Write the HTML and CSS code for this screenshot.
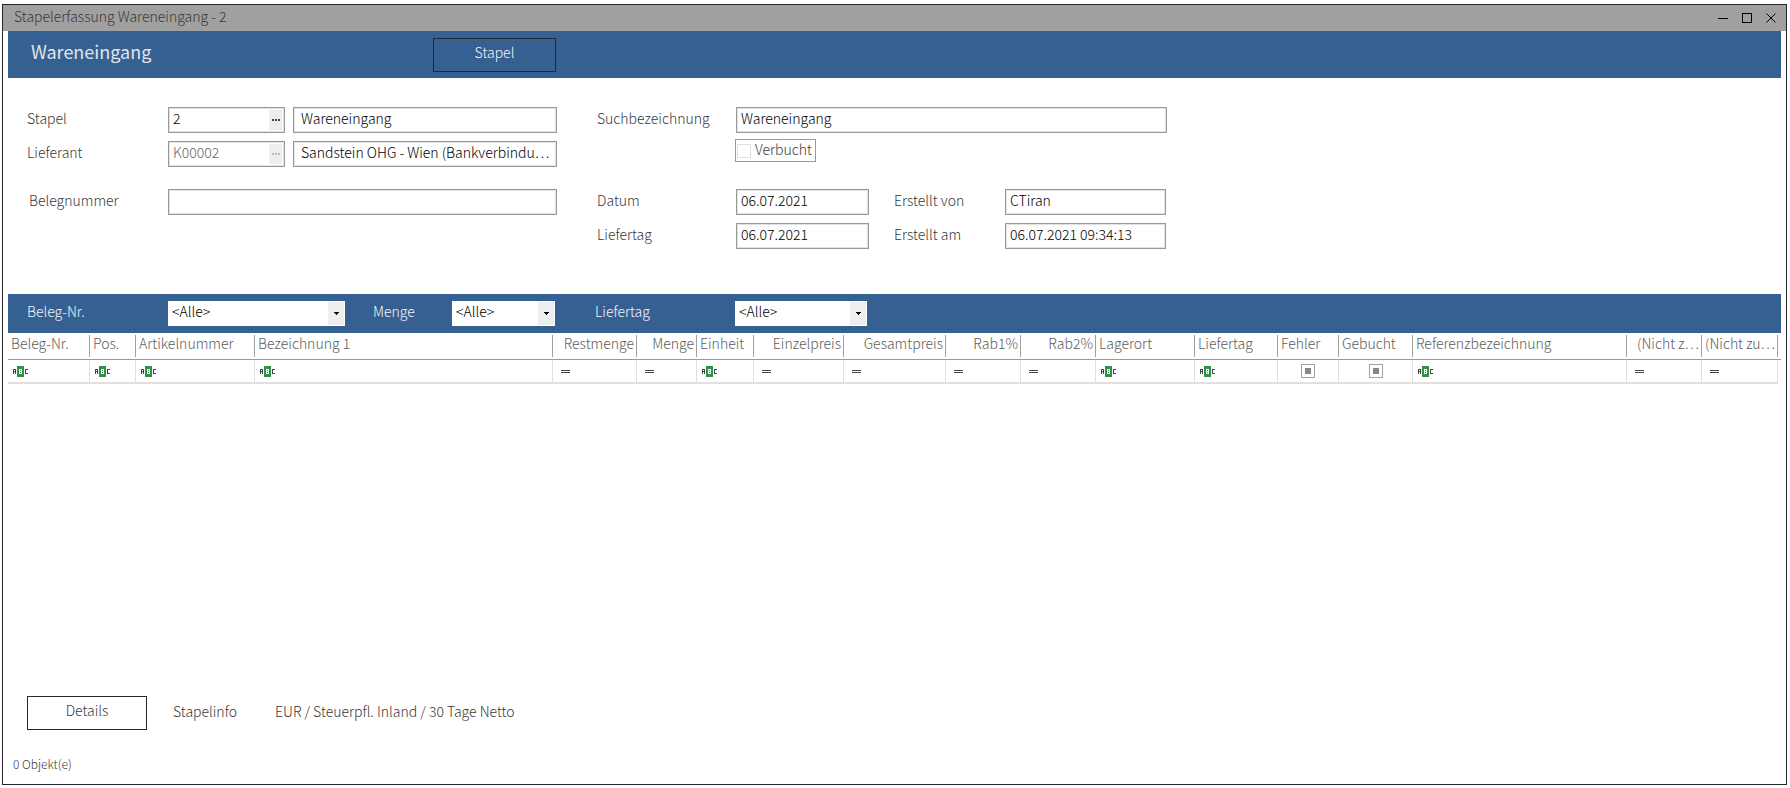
FILE: index.html
```html
<!DOCTYPE html>
<html lang="de">
<head>
<meta charset="utf-8">
<title>Stapelerfassung Wareneingang - 2</title>
<link rel="stylesheet" href="styles.css">
</head>
<body>
<svg class="defs" aria-hidden="true">
  <symbol id="abc" viewBox="0 0 16 12">
    <path fill="#444" d="M0 4h3v1H0zM0 5h1v4H0zM2 5h1v4H2zM1 6h1v1H1zM12 4h3v1h-3zM12 5h1v3h-1zM12 8h3v1h-3z"/>
    <path fill="#2f9247" d="M4 1h7v11H4z"/>
    <path fill="#fff" d="M6 4h3v1H6zM6 6h3v1H6zM6 8h3v1H6zM6 4h1v5H6zM8 4h1v5H8z"/>
  </symbol>
  <symbol id="arrow" viewBox="0 0 5 3">
    <path fill="#000" d="M0 0h5v1H0zM1 1h3v1H1zM2 2h1v1H2z"/>
  </symbol>
  <symbol id="dots" viewBox="0 0 8 2">
    <path fill="currentColor" d="M0 0h2v2H0zM3 0h2v2H3zM6 0h2v2H6z"/>
  </symbol>
</svg>
<main class="window">
  <header class="titlebar">
    <span class="titlebar-text">Stapelerfassung Wareneingang - 2</span>
    <button class="win-btn" type="button" aria-label="Minimieren"><svg viewBox="0 0 10 10"><path d="M0 5h10v1H0z"/></svg></button>
    <button class="win-btn" type="button" aria-label="Maximieren"><svg viewBox="0 0 10 10"><path d="M0 0h10v10H0zM1 1v8h8V1z" fill-rule="evenodd"/></svg></button>
    <button class="win-btn" type="button" aria-label="Schließen"><svg class="smooth" viewBox="0 0 10 10"><path d="M0.5 0.5l9 9M9.5 0.5l-9 9" stroke="#000" fill="none"/></svg></button>
  </header>
  <div class="content">
    <div class="banner">
      <h1 class="banner-title">Wareneingang</h1>
      <button class="box-btn banner-btn" type="button">Stapel</button>
    </div>

    <form class="form">
      <div class="form-left">
        <div class="row">
          <label class="label" for="stapel">Stapel</label>
          <div class="field lookup"><input id="stapel" value="2"><button type="button" aria-label="Stapel suchen"><svg><use href="#dots"/></svg></button></div>
          <div class="field wide"><input aria-label="Stapelbezeichnung" value="Wareneingang"></div>
        </div>
        <div class="row">
          <label class="label" for="lieferant">Lieferant</label>
          <div class="field lookup disabled"><input id="lieferant" value="K00002" disabled><button type="button" disabled aria-label="Lieferant suchen"><svg><use href="#dots"/></svg></button></div>
          <div class="field wide"><input aria-label="Lieferantenname" value="Sandstein OHG - Wien (Bankverbindu…"></div>
        </div>
        <div class="row row-gap">
          <label class="label indent" for="beleg">Belegnummer</label>
          <div class="field full"><input id="beleg"></div>
        </div>
      </div>
      <div class="form-right">
        <div class="row">
          <label class="label" for="such">Suchbezeichnung</label>
          <div class="field search"><input id="such" value="Wareneingang"></div>
        </div>
        <label class="check"><input type="checkbox"><span>Verbucht</span></label>
        <div class="row">
          <label class="label" for="datum">Datum</label>
          <div class="field date"><input id="datum" value="06.07.2021"></div>
          <label class="label label-2" for="von">Erstellt von</label>
          <div class="field created"><input id="von" value="CTiran"></div>
        </div>
        <div class="row">
          <label class="label" for="liefertag">Liefertag</label>
          <div class="field date"><input id="liefertag" value="06.07.2021"></div>
          <label class="label label-2" for="am">Erstellt am</label>
          <div class="field created"><input id="am" value="06.07.2021 09:34:13"></div>
        </div>
      </div>
    </form>

    <div class="filterbar">
      <label class="f-label f1" for="f-beleg">Beleg-Nr.</label>
      <div class="select s1"><select id="f-beleg"><option>&lt;Alle&gt;</option></select><span class="drop"><svg><use href="#arrow"/></svg></span></div>
      <label class="f-label f2" for="f-menge">Menge</label>
      <div class="select s2"><select id="f-menge"><option>&lt;Alle&gt;</option></select><span class="drop"><svg><use href="#arrow"/></svg></span></div>
      <label class="f-label f3" for="f-tag">Liefertag</label>
      <div class="select s3"><select id="f-tag"><option>&lt;Alle&gt;</option></select><span class="drop"><svg><use href="#arrow"/></svg></span></div>
    </div>

    <div class="grid-area">
      <table class="grid">
        <colgroup>
          <col class="w82"><col class="w46"><col class="w119"><col class="w298"><col class="w84"><col class="w60"><col class="w57"><col class="w90"><col class="w102"><col class="w75"><col class="w75"><col class="w99"><col class="w83"><col class="w61"><col class="w74"><col class="w214"><col class="w75"><col class="w76"><col class="w3">
        </colgroup>
        <thead>
          <tr>
            <th><span>Beleg-Nr.</span></th><th><span>Pos.</span></th><th><span>Artikelnummer</span></th><th><span>Bezeichnung 1</span></th>
            <th class="num"><span>Restmenge</span></th><th class="num"><span>Menge</span></th><th><span>Einheit</span></th><th class="num"><span>Einzelpreis</span></th>
            <th class="num"><span>Gesamtpreis</span></th><th class="num"><span>Rab1%</span></th><th class="num"><span>Rab2%</span></th><th><span>Lagerort</span></th>
            <th><span>Liefertag</span></th><th><span>Fehler</span></th><th><span>Gebucht</span></th><th><span>Referenzbezeichnung</span></th>
            <th class="num"><span>(Nicht z…</span></th><th class="num"><span>(Nicht zu…</span></th><th class="end"></th>
          </tr>
        </thead>
        <tbody>
          <tr>
            <td><svg class="abc"><use href="#abc"/></svg></td>
            <td><svg class="abc"><use href="#abc"/></svg></td>
            <td><svg class="abc"><use href="#abc"/></svg></td>
            <td><svg class="abc"><use href="#abc"/></svg></td>
            <td><i class="eq"></i></td>
            <td><i class="eq"></i></td>
            <td><svg class="abc"><use href="#abc"/></svg></td>
            <td><i class="eq"></i></td>
            <td><i class="eq"></i></td>
            <td><i class="eq"></i></td>
            <td><i class="eq"></i></td>
            <td><svg class="abc"><use href="#abc"/></svg></td>
            <td><svg class="abc"><use href="#abc"/></svg></td>
            <td class="mid"><input class="tri" type="checkbox" aria-label="Fehler"></td>
            <td class="mid"><input class="tri" type="checkbox" aria-label="Gebucht"></td>
            <td><svg class="abc"><use href="#abc"/></svg></td>
            <td><i class="eq"></i></td>
            <td><i class="eq"></i></td>
            <td class="end"></td>
          </tr>
        </tbody>
      </table>
    </div>

    <div class="details">
      <button class="box-btn details-btn" type="button">Details</button>
      <span class="info-label">Stapelinfo</span>
      <span class="info">EUR / Steuerpfl. Inland / 30 Tage Netto</span>
    </div>
    <footer class="status">0 Objekt(e)</footer>
  </div>
</main>
</body>
</html>
```
FILE: styles.css
```css
* { box-sizing: border-box; }
body {
  margin: 0;
  padding: 4px 3px 3px 2px;
  height: 100vh;
  display: flex;
  background: #fff;
  color: #383838;
  font: 300 14px/20px "Noto Sans CJK KR", "Noto Sans", sans-serif;
}
button, input, select { font: inherit; color: inherit; margin: 0; }
svg { display: block; shape-rendering: crispEdges; }
.defs { position: absolute; width: 0; height: 0; }

.window {
  flex: 1;
  min-width: 0;
  display: flex;
  flex-direction: column;
  border: 1px solid #26262c;
  background: #fff;
}
.titlebar {
  display: flex;
  align-items: center;
  height: 26px;
  padding: 0 10px 0 11px;
  gap: 14px;
  background: #a0a0a0;
}
.titlebar-text { flex: 1; padding-bottom: 4px; }
.win-btn { width: 10px; height: 10px; padding: 0; border: 0; background: none; }
.win-btn svg { width: 10px; height: 10px; }
.smooth { shape-rendering: auto; }

.content { flex: 1; display: flex; flex-direction: column; padding: 0 5px; }
.banner {
  display: flex;
  align-items: center;
  height: 47px;
  padding-left: 23px;
  background: #366092;
  color: #f4f6f9;
}
.banner-title { width: 402px; margin: 0; padding-bottom: 7px; color: #e0e5ec; font-size: 18px; font-weight: 400; line-height: 24px; }
.box-btn { height: 34px; padding: 0 0 6px; border: 1px solid #26262c; background: none; }
.banner-btn { width: 123px; }

.form { display: flex; gap: 40px; padding: 29px 19px 45px; }
.form-left, .form-right { display: flex; flex-direction: column; gap: 8px; }
.row { display: flex; height: 26px; }
.row-gap { margin-top: 14px; }
.label { padding-top: 1px; }
.form-left .label { width: 141px; }
.form-left .indent { padding-left: 2px; }
.form-right .label { width: 139px; }
.form-right .label-2 { width: 136px; padding-left: 25px; }
.field {
  display: flex;
  border: 1px solid #999;
  box-shadow: inset 0 0 0 1px #e2e2e2;
  padding: 2px 2px 2px 0;
  color: #000;
}
.field input {
  flex: 1;
  min-width: 0;
  padding: 0 4px 4px;
  border: 0;
  background: none;
  outline: none;
}
.field button {
  width: 13px;
  padding: 0;
  border: 0;
  background: #eee;
  color: #444;
  display: flex;
  align-items: center;
  justify-content: center;
}
.field svg { width: 8px; height: 2px; }
.disabled, .disabled input { color: #666; }
.disabled button { color: #bbb; }
.lookup { width: 117px; margin-right: 8px; }
.wide { width: 264px; }
.wide input { padding-left: 7px; padding-right: 0; }
.full { width: 389px; }
.search { width: 431px; }
.date { width: 133px; }
.created { width: 161px; }
.check {
  display: flex;
  align-items: center;
  align-self: flex-start;
  height: 23px;
  gap: 4px;
  margin: -2px 0 19px 138px;
  padding: 0 3px 0 1px;
  border: 1px solid #999;
}
.check span { padding-bottom: 4px; }
.check input { appearance: none; width: 14px; height: 14px; border: 1px solid #e0e0e0; }

.filterbar {
  display: flex;
  align-items: center;
  height: 39px;
  padding-left: 19px;
  background: #366092;
  color: #f4f6f9;
}
.f-label { padding-bottom: 5px; }
.f1 { width: 141px; }
.f2 { width: 107px; padding-left: 28px; }
.f3 { width: 180px; padding-left: 40px; }
.select { position: relative; height: 25px; background: #fff; color: #000; }
.select select {
  appearance: none;
  width: 100%;
  height: 25px;
  padding: 0 20px 5px 4px;
  border: 0;
  background: none;
}
.s1 { width: 177px; }
.s2 { width: 103px; }
.s3 { width: 132px; }
.drop {
  position: absolute;
  top: 1px;
  right: 1px;
  bottom: 1px;
  width: 16px;
  display: flex;
  align-items: center;
  justify-content: center;
  background: #eee;
  pointer-events: none;
}
.drop svg { width: 5px; height: 3px; }

.grid-area { flex: 1; }
.grid { width: 100%; table-layout: fixed; border-collapse: separate; border-spacing: 0; color: #5c5c5c; }
.grid th { height: 27px; padding: 2px 0; border-bottom: 1px solid #999; font-weight: inherit; text-align: left; }
.grid th span { display: block; height: 22px; padding: 0 2px 0 3px; line-height: 16px; border-right: 1px solid #a0a0a0; white-space: nowrap; }
.grid .num { text-align: right; }
.grid td { height: 24px; padding: 0 4px 0 5px; border-right: 1px solid #e0e0e0; border-bottom: 2px solid #e0e0e0; }
.grid .mid { padding: 0; }
.grid .end { border-right: 0; padding: 0; }
.grid td.end { border-bottom: 0; }
.abc { width: 16px; height: 12px; }
.eq { display: block; width: 9px; height: 3px; margin: 1px 0 0 3px; border: solid #444; border-width: 1px 0; }
.tri { appearance: none; display: block; width: 14px; height: 14px; margin: 0 auto; border: 1px solid #a0a0a0; background: #888 content-box; padding: 3px; }
.w3 { width: 3px; } .w46 { width: 46px; } .w57 { width: 57px; } .w60 { width: 60px; }
.w61 { width: 61px; } .w74 { width: 74px; } .w75 { width: 75px; } .w76 { width: 76px; }
.w82 { width: 82px; } .w83 { width: 83px; } .w84 { width: 84px; } .w90 { width: 90px; }
.w99 { width: 99px; } .w102 { width: 102px; } .w119 { width: 119px; } .w214 { width: 214px; } .w298 { width: 298px; }

.details { display: flex; align-items: center; padding-left: 19px; }
.details-btn { width: 120px; margin-right: 26px; }
.info-label { width: 102px; }
.info-label, .info { padding-bottom: 4px; }
.status { padding: 24px 0 10px 5px; font-size: 12px; }
```
